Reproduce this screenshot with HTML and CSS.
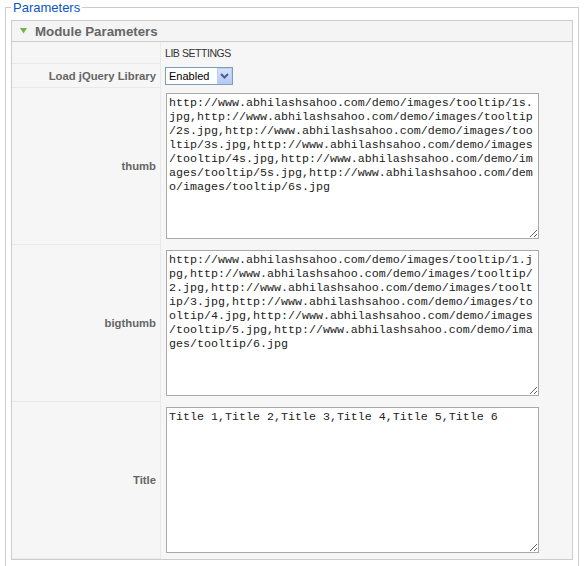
FILE: index.html
```html
<!DOCTYPE html>
<html lang="en">
<head>
    <meta charset="UTF-8">
    <meta name="viewport" content="width=device-width, initial-scale=1.0">
    <title>Module Parameters</title>
    <link rel="stylesheet" href="styles.css">
</head>
<body>

    <fieldset class="adminform">
        <legend>Parameters</legend>

        <div class="panel">
            <h3 class="panel-title">
                <!-- fleche verte du panneau ouvert -->
                <svg class="toggler" width="7" height="6" viewBox="0 0 7 6"><polygon points="0,0 7,0 3.5,5.5" fill="#76b347"/></svg>
                Module Parameters
            </h3>

            <div class="paramlist">
                <div class="param-row">
                    <div class="param-key"></div>
                    <div class="param-value note">LIB SETTINGS</div>
                </div>

                <div class="param-row">
                    <div class="param-key"><label for="jquery">Load jQuery Library</label></div>
                    <div class="param-value select-cell">
                        <span class="select-wrap">
                            <select id="jquery" class="inputbox">
                                <option>Enabled</option>
                                <option>Disabled</option>
                            </select>
                            <span class="select-btn">
                                <svg width="9" height="6" viewBox="0 0 9 6"><polyline points="1,1 4.5,4.5 8,1" fill="none" stroke="#4c5f86" stroke-width="2"/></svg>
                            </span>
                        </span>
                    </div>
                </div>

                <div class="param-row">
                    <div class="param-key"><label for="thumb">thumb</label></div>
                    <div class="param-value">
                        <textarea id="thumb" class="text_area" rows="10" cols="52">http://www.abhilashsahoo.com/demo/images/tooltip/1s.jpg,http://www.abhilashsahoo.com/demo/images/tooltip/2s.jpg,http://www.abhilashsahoo.com/demo/images/tooltip/3s.jpg,http://www.abhilashsahoo.com/demo/images/tooltip/4s.jpg,http://www.abhilashsahoo.com/demo/images/tooltip/5s.jpg,http://www.abhilashsahoo.com/demo/images/tooltip/6s.jpg</textarea>
                    </div>
                </div>

                <div class="param-row">
                    <div class="param-key"><label for="bigthumb">bigthumb</label></div>
                    <div class="param-value">
                        <textarea id="bigthumb" class="text_area" rows="10" cols="52">http://www.abhilashsahoo.com/demo/images/tooltip/1.jpg,http://www.abhilashsahoo.com/demo/images/tooltip/2.jpg,http://www.abhilashsahoo.com/demo/images/tooltip/3.jpg,http://www.abhilashsahoo.com/demo/images/tooltip/4.jpg,http://www.abhilashsahoo.com/demo/images/tooltip/5.jpg,http://www.abhilashsahoo.com/demo/images/tooltip/6.jpg</textarea>
                    </div>
                </div>

                <div class="param-row">
                    <div class="param-key"><label for="title">Title</label></div>
                    <div class="param-value">
                        <textarea id="title" class="text_area" rows="10" cols="52">Title 1,Title 2,Title 3,Title 4,Title 5,Title 6</textarea>
                    </div>
                </div>
            </div>
        </div>
    </fieldset>

</body>
</html>
```

FILE: styles.css
```css
body {
    font-family: "Liberation Sans", Arial, sans-serif;
    font-size: 11px;
    background-color: #fff;
    margin: 0;
}
fieldset.adminform {
    margin: 0 5px;
    padding: 5px 5px 20px;
    border: 1px solid #ccc;
}
fieldset.adminform legend {
    color: #0b55c4;
    font-size: 13px;
    line-height: 14px;
    padding: 1px 2px 0;
}
.panel {
    border: 1px solid #ccc;
}
.panel-title {
    margin: 0;
    height: 20px;
    padding-left: 8px;
    display: flex;
    align-items: center;
    gap: 8px;
    background-color: #f4f4f4;
    border-bottom: 1px solid #ccc;
    color: #666;
    font-size: 13.3px;
    font-weight: bold;
}
.paramlist {
    background-color: #f6f6f6;
}
.param-row {
    display: grid;
    grid-template-columns: 149px 1fr;
}
.param-key {
    display: flex;
    align-items: center;
    justify-content: flex-end;
    padding-right: 4px;
    border-right: 1px solid #e9e9e9;
    border-bottom: 1px solid #e9e9e9;
    color: #666;
    font-size: 11.3px;
    font-weight: bold;
}
.param-value {
    padding: 5px 4px 6px 4px;
}
.param-value.note {
    padding: 4px 4px 4px 4px;
    line-height: 14px;
    color: #333;
    font-size: 10.5px;
    letter-spacing: -0.45px;
}
.param-value.select-cell {
    padding: 3px 4px;
}
.select-wrap {
    position: relative;
    display: inline-block;
    vertical-align: top;
}
.inputbox {
    -webkit-appearance: none;
    appearance: none;
    display: block;
    width: 68px;
    height: 18px;
    margin: 0;
    padding: 0 0 0 3px;
    border: 1px solid #7f9db9;
    border-radius: 0;
    background-color: #fff;
    color: #000;
    font-family: "Liberation Sans", Arial, sans-serif;
    font-size: 11px;
}
.select-btn {
    position: absolute;
    top: 1px;
    right: 1px;
    bottom: 1px;
    width: 15px;
    display: flex;
    align-items: center;
    justify-content: center;
    background: linear-gradient(#d6e2fd, #b4c9f7);
    border: 1px solid #bccdf2;
    box-sizing: border-box;
    pointer-events: none;
}
.text_area {
    display: block;
    box-sizing: content-box;
    width: 367px;
    height: 140px;
    margin: 0 0 0 1px;
    padding: 2px;
    border: 1px solid #a9a9a9;
    background-color: #fff;
    color: #222;
    font-family: "Liberation Mono", "Courier New", monospace;
    font-size: 11.67px;
    line-height: 14px;
    word-break: break-all;
    line-break: anywhere;
}
```
